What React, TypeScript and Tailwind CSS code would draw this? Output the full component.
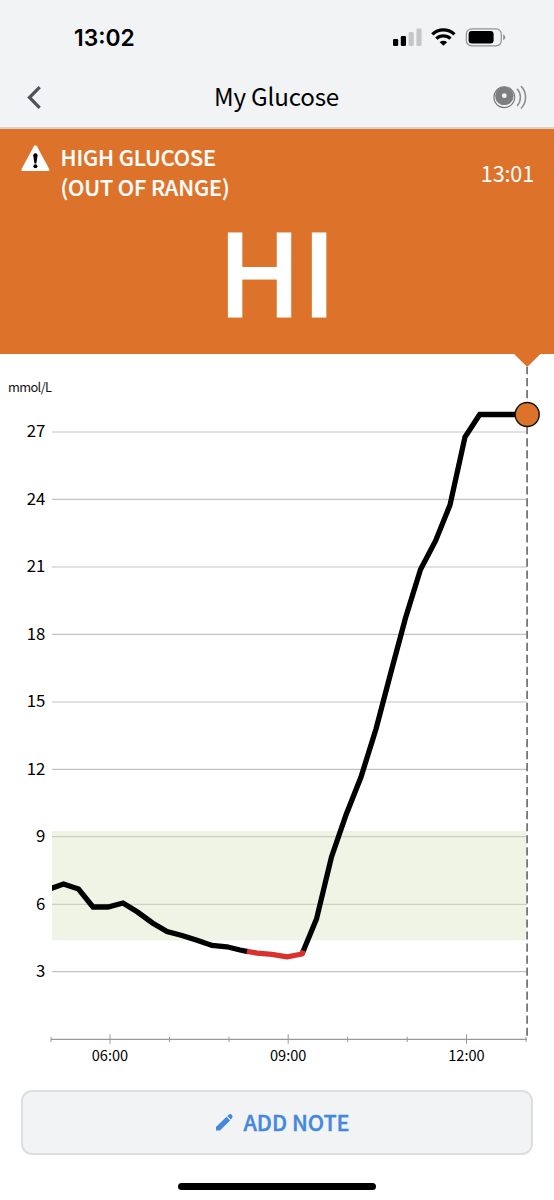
const gridLines = [
  { label: "27", y: 432 },
  { label: "24", y: 499.4 },
  { label: "21", y: 567 },
  { label: "18", y: 634.3 },
  { label: "15", y: 702 },
  { label: "12", y: 769.3 },
  { label: "9", y: 836.7 },
  { label: "6", y: 904.3 },
  { label: "3", y: 971.7 },
];

const hourLabels = [
  { label: "06:00", x: 110 },
  { label: "09:00", x: 288.2 },
  { label: "12:00", x: 466.5 },
];

const minorTicks = [51, 169.5, 229, 347.7, 407.2, 526];

const fallingTrace =
  "51,888.5 63.5,884 78.5,889 93,907 108,907 123,903 137.5,912 152.5,923 167,931.5 182,935.5 197,940.3 212,945.5 227,946.8 240,950 248,951.7";
const risingTrace =
  "302,954 316.5,919 331.5,857 346,815 361,777 376,729 391,672 405.5,618 420.5,569.5 435.5,541 450,505 465,437 479.7,414.5 527,414.5";
const lowTrace = "247,951.3 257,953.1 272,954.3 287,956.8 302,954 303,950.5";

function StatusBar() {
  return (
    <div className="flex h-[66px] items-start justify-between pt-[24px] pr-[48px] pl-[74px]">
      <span className="font-['Inter',sans-serif] text-[22.8px] leading-[28px] font-semibold">13:02</span>
      <svg className="mt-[3px]" width="113" height="22" viewBox="0 0 113 22">
        <rect x="0" y="12" width="5.2" height="7" rx="1.3" />
        <rect x="7.8" y="9" width="5.2" height="10" rx="1.3" />
        <rect x="15.6" y="5" width="5.2" height="14" rx="1.3" fill="#c5c6c8" />
        <rect x="23.4" y="1.5" width="5.2" height="17.5" rx="1.3" fill="#c5c6c8" />
        <g fill="none" stroke="#000" strokeWidth="3.2">
          <path d="M39.3 7.4A15.8 15.8 0 0 1 61.5 7.4" />
          <path d="M43.3 11.7A10.2 10.2 0 0 1 57.5 11.7" />
        </g>
        <path d="M46.7 15.3A5.4 5.4 0 0 1 54.1 15.3L50.4 18.8Z" />
        <rect x="73.3" y="1.8" width="35" height="17" rx="5.2" fill="none" stroke="#919294" strokeWidth="1.2" />
        <rect x="75.6" y="4.1" width="25" height="12.4" rx="3.2" />
        <path d="M110.2 7.3A3.2 3.2 0 0 1 110.2 13.3Z" fill="#919294" />
      </svg>
    </div>
  );
}

function TitleBar() {
  return (
    <div className="flex h-[62px] items-center justify-between pr-[26px] pl-[26px]">
      <svg width="32" height="28" viewBox="0 0 32 28">
        <path d="M13.7 4.2L3.5 14.5L13.7 24.8" fill="none" stroke="#515257" strokeWidth="3.2" />
      </svg>
      <h1 className="pb-[3px] pl-[3px] text-[24.2px] leading-[36px] tracking-[-0.2px]">My Glucose</h1>
      <svg width="36" height="28" viewBox="0 0 36 28">
        <circle cx="12.3" cy="14.2" r="10.4" fill="none" stroke="#77787a" strokeWidth="1.1" />
        <circle cx="12.3" cy="12.9" r="9.2" fill="#7d7e80" />
        <circle cx="12.3" cy="12.7" r="2.4" fill="#f1f3f5" />
        <path d="M25.1 5.7A12.8 12.8 0 0 1 25.1 22.9M29 3.1A16 16 0 0 1 29 25.5" fill="none" stroke="#8a8b8d" strokeWidth="1.5" />
      </svg>
    </div>
  );
}

function GlucoseBanner() {
  return (
    <section className="h-[225px] bg-[#dd732b] text-white">
      <div className="flex pt-[13px] pr-[20px] pl-[21px]">
        <svg className="mt-[3px]" width="29" height="29" viewBox="0 0 29 29">
          <path d="M12.9 1.2Q14.4 -.7 15.9 1.2L28.2 24Q28.8 26 27.2 26H1.6Q0 26 .6 24Z" fill="#fff" />
          <path d="M12.2 10.4Q12.2 8.2 14.4 8.2T16.6 10.4L15.3 18.4H13.5Z" fill="#000" />
          <circle cx="14.4" cy="21.2" r="2" fill="#000" />
        </svg>
        <div className="ml-[10.5px] grow text-[21.7px] leading-[30px] font-medium tracking-[-0.15px] [-webkit-text-stroke:0.2px_white]">
          <p>HIGH GLUCOSE</p>
          <p>(OUT OF RANGE)</p>
        </div>
        <time className="mt-[16px] text-[21.6px] leading-[30px] tracking-[-0.15px]">13:01</time>
      </div>
      <p className="mt-[10px] text-center text-[113.5px] leading-[112px] font-medium [-webkit-text-stroke:1.2px_white]">HI</p>
    </section>
  );
}

function GlucoseChart() {
  return (
    <svg className="block" width="554" height="736" viewBox="0 354 554 736">
      {gridLines.map((line) => (
        <g key={line.label}>
          <path d={`M52 ${line.y}H527`} stroke="#000" strokeOpacity=".24" strokeWidth="1.2" />
          <text x="45.3" y={line.y + 5.2} textAnchor="end" fontSize="16.8">
            {line.label}
          </text>
        </g>
      ))}
      <rect x="52" y="831" width="475" height="109.3" fill="#d6e3bd" fillOpacity=".4" />
      <text x="8" y="392" fontSize="12.8" fill="#111" textLength="44">
        mmol/L
      </text>
      <path d="M51 1039.3H527" stroke="#999" strokeWidth="1.2" />
      {minorTicks.map((x) => (
        <path key={x} d={`M${x} 1036.8V1042`} stroke="#999" />
      ))}
      {hourLabels.map((hour) => (
        <g key={hour.label}>
          <path d={`M${hour.x} 1034.2V1043.8`} stroke="#999" />
          <text x={hour.x} y="1061" textAnchor="middle" fontSize="14.6">
            {hour.label}
          </text>
        </g>
      ))}
      <path d="M527.1 367V1039" stroke="#777" strokeWidth="1.8" strokeDasharray="8.2 3.83" strokeDashoffset="1" />
      <path d="M514 353.9H540.5L527.2 367Z" fill="#dd732b" />
      <g fill="none" strokeWidth="5.3" strokeLinejoin="miter">
        <polyline points={fallingTrace} stroke="#000" />
        <polyline points={risingTrace} stroke="#000" />
        <polyline points={lowTrace} stroke="#d9322e" strokeLinejoin="round" />
      </g>
      <rect x="48" y="870" width="4" height="30" fill="#fff" />
      <circle cx="527.2" cy="414.5" r="12" fill="#dd732b" stroke="#111" strokeWidth="1.4" />
    </svg>
  );
}

function NoteButton() {
  return (
    <button className="mx-[21px] flex h-[65px] w-[512px] items-center justify-center gap-[9px] rounded-[11px] border-2 border-[#dcdee0] bg-[#f1f3f5] pl-[11px] text-[#4388dc]">
      <svg width="19" height="19" viewBox="0 0 19 19" fill="currentColor">
        <path d="M1 14L11.5 3.8L15.1 7.4L5 17.5H1Z" />
        <path d="M12.3 3L14 1.5Q15.3 .5 16.7 1.7Q18.2 3.2 17.2 4.8L15.8 6.6Z" />
      </svg>
      <span className="pb-[2px] text-[21.6px] leading-[32px] font-medium [-webkit-text-stroke:0.4px_#4388dc]">ADD NOTE</span>
    </button>
  );
}

export default function App() {
  return (
    <main className="flex h-[1200px] w-[554px] flex-col overflow-hidden bg-white font-['Noto_Sans_CJK_SC',sans-serif] text-black">
      <header className="h-[129px] shrink-0 border-b-2 border-[#dcd0c9] bg-[#f1f3f5]">
        <StatusBar />
        <TitleBar />
      </header>
      <GlucoseBanner />
      <GlucoseChart />
      <NoteButton />
      <div className="mx-auto mt-[28px] h-[6.6px] w-[198px] rounded-full bg-black" />
    </main>
  );
}
